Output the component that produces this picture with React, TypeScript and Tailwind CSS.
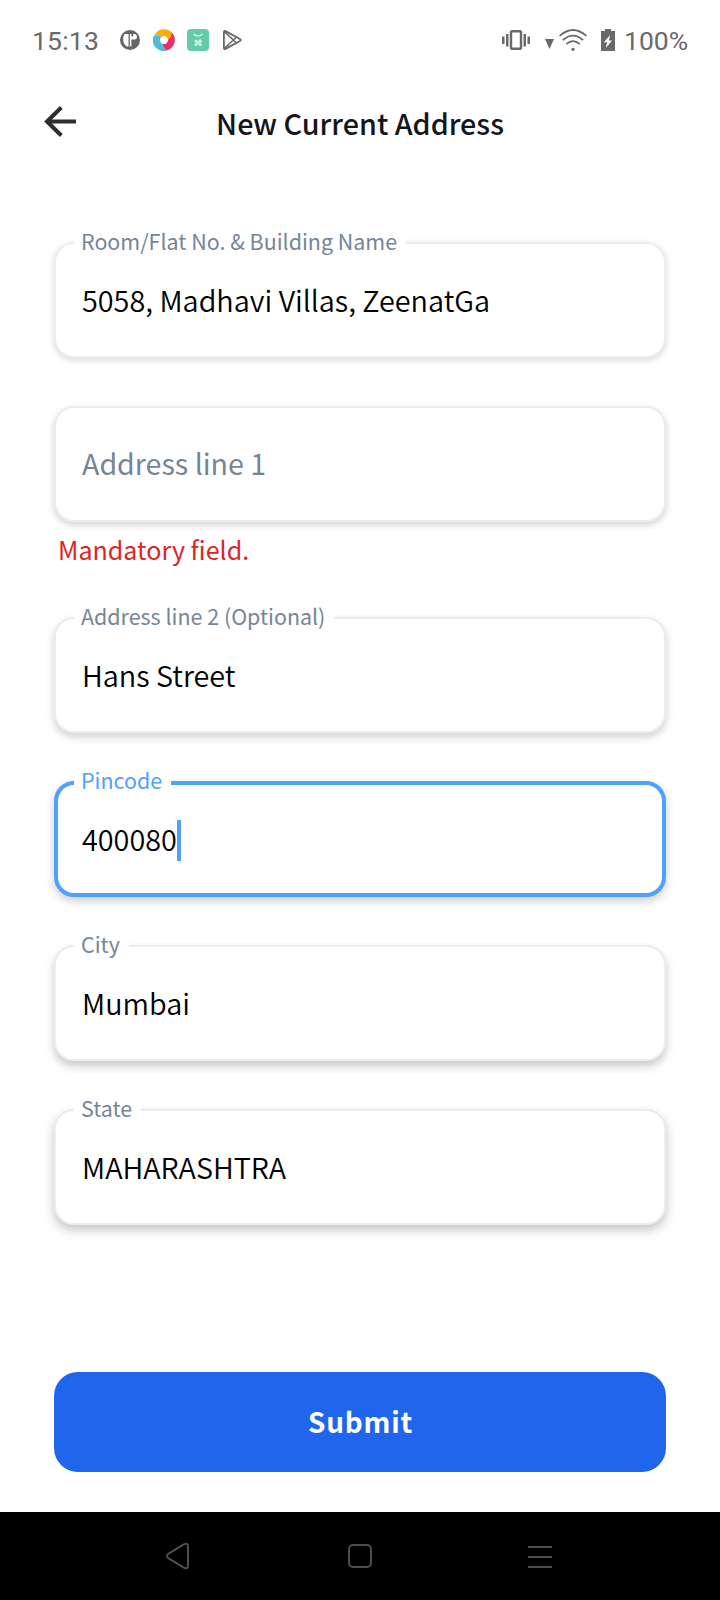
import React from "react";

type FieldProps = {
  label?: string;
  value?: string;
  placeholder?: string;
  focused?: boolean;
  shadow: string;
};

function Field({ label, value, placeholder, focused, shadow }: FieldProps) {
  return (
    <div
      className={`relative flex h-[116px] w-full items-center rounded-[20px] bg-white ${shadow} ${
        focused ? "border-4 border-[#4fa1ff] pl-6" : "border-2 border-[#e9eef3] pl-[26px]"
      }`}
    >
      {label && (
        <span
          className={`absolute bg-white pr-[9px] pl-[7px] text-[21.45px] leading-5 whitespace-nowrap ${
            focused ? "-top-[15px] left-4 text-[#4fa1ff]" : "-top-[13px] left-[18px] text-[#758596]"
          }`}
        >
          {label}
        </span>
      )}
      {value && <span className="text-[28.8px] leading-10 font-[350] whitespace-nowrap text-black">{value}</span>}
      {placeholder && (
        <span className="pb-[2px] text-[28.6px] leading-10 whitespace-nowrap text-[#758596]">{placeholder}</span>
      )}
      {focused && <span className="mt-[2px] h-[41px] w-1 bg-[#4fa1ff]" />}
    </div>
  );
}

function StatusBar() {
  return (
    <div className="flex h-20 items-center pr-8 pl-8 font-['Roboto',sans-serif] text-[26.5px] leading-8 text-[#696969]">
      <span className="w-[68px] pt-px tracking-[0.2px] whitespace-nowrap">15:13</span>
      <svg className="ml-5" width="20" height="20" viewBox="0 0 20 20">
        <circle cx="10" cy="10" r="10" fill="#666" />
        <path d="M4.500 4h4v12.500H7Q3.200 14 3.200 9.500q0-3.200 1.300-5.500z" fill="#fff" />
        <path d="M9.800 4h5.600q1.600 1.300 1.600 2.800 0 2.600-2.400 2.800h-3.200v6.900H9.800z" fill="#fff" />
        <rect x="11.400" y="4" width="1.800" height="2.400" fill="#666" />
      </svg>
      <svg className="ml-[13px]" width="22" height="22" viewBox="0 0 22 22">
        <path d="M1 7A11 11 0 0 1 18.400 3Q19.500 8 15 11A4 4 0 0 0 8.500 8Q5 5 1 7z" fill="#fbad0b" />
        <path d="M18.400 3A11 11 0 0 1 14 21.500Q10 20 9.500 14.800A4 4 0 0 0 15 11Q19 8 18.400 3z" fill="#e8316c" />
        <path d="M14 21.500A11 11 0 0 1 0 8.500L1 7Q5 5 8.500 8A4 4 0 0 0 9.500 14.800Q10 20 14 21.500z" fill="#52b9d6" />
      </svg>
      <svg className="ml-3" width="22" height="22" viewBox="0 0 22 22">
        <rect width="22" height="22" rx="4" fill="#62cbaa" />
        <path d="M6.500 5.200Q11 8.500 15.500 5.200" fill="none" stroke="#fff" strokeWidth="1.300" />
        <g fill="#d9f4eb">
          <circle cx="9" cy="12" r="1.600" />
          <circle cx="13.200" cy="12" r="1.800" />
          <circle cx="9" cy="15.500" r="1.600" />
          <circle cx="13.200" cy="15.500" r="1.600" />
          <circle cx="11" cy="13.800" r="1.200" />
        </g>
      </svg>
      <svg className="ml-[14px]" width="19" height="20" viewBox="0 0 19 20" fill="none" stroke="#696969" strokeWidth="1.800" strokeLinejoin="round">
        <path d="M.9 2Q.9.300 2.500 1.100L17 9q1.300 1 0 2L2.500 18.900Q.9 19.600.9 18z" />
        <path d="M1.300 1.500 13.500 13M1.300 18.500 13.500 7" strokeWidth="1.600" />
      </svg>

      <svg className="ml-auto" width="28" height="20" viewBox="0 0 28 20" fill="#696969">
        <path d="M0 6.500h2.500v7.500H0zM4 4h2.500v12.500H4zM21.500 4H24v12.500h-2.500zM25.500 6.500H28v7.500h-2.500z" />
        <rect x="9" y="1.200" width="10" height="17.600" rx="1" fill="none" stroke="#696969" strokeWidth="2.400" />
      </svg>
      <svg className="mt-2 ml-[15px]" width="9" height="10" viewBox="0 0 9 10">
        <path d="M0 0h9L4.500 10z" fill="#696969" />
      </svg>
      <svg className="ml-[5px]" width="28" height="22" viewBox="0 0 28 22" fill="none" stroke="#696969" strokeWidth="1.700">
        <path d="M.6 6.800Q14-4.800 27.400 6.800M3.800 11.100Q14 2 24.200 11.100M7.300 15.200Q14 9 20.700 15.200" />
        <circle cx="14" cy="20.300" r="1.600" fill="#696969" stroke="none" />
      </svg>
      <svg className="ml-[14px]" width="14" height="22" viewBox="0 0 14 22">
        <path d="M0 2h4V0h6v2h4v20H0z" fill="#696969" />
        <path d="M9.200 6 2.800 13.200h3.400L4.800 19l6.300-7.600H7.800z" fill="#fff" />
      </svg>
      <span className="ml-[9px] w-16 pt-px whitespace-nowrap">100%</span>
    </div>
  );
}

function NavBar() {
  return (
    <div className="flex h-[88px] items-center bg-black pl-[165px]">
      <svg width="26" height="28" viewBox="0 0 26 28" fill="none" stroke="#4e4e4e" strokeWidth="2">
        <path d="M3.300 11.800 18.300 2.600Q23 .2 23 4.500v19q0 4.300-4.700 1.900L3.300 16.200q-2.600-2.200 0-4.400z" />
      </svg>
      <svg className="ml-[157px]" width="24" height="24" viewBox="0 0 24 24" fill="none" stroke="#4e4e4e" strokeWidth="2">
        <rect x="1" y="1" width="22" height="22" rx="4" />
      </svg>
      <svg className="mt-[2px] ml-[156px]" width="24" height="22" viewBox="0 0 24 22" stroke="#4e4e4e" strokeWidth="2">
        <path d="M0 1h24M0 11h24M0 21h24" />
      </svg>
    </div>
  );
}

export default function App() {
  return (
    <div className="flex h-[1600px] w-[720px] flex-col bg-white font-['Noto_Sans_CJK_SC',sans-serif]">
      <StatusBar />
      <header className="grid h-[84px] grid-cols-[76px_1fr_76px] items-center">
        <svg className="ml-11" width="32" height="32" viewBox="0 0 32 32" fill="none" stroke="#2e2e2e" strokeWidth="4">
          <path d="M32 15.500H3M17.300 1.500 3 15.500l14.300 14" />
        </svg>
        <h1 className="pt-[2px] text-center text-[28.7px] leading-10 font-medium text-[#13171b]">New Current Address</h1>
      </header>
      <main className="flex flex-1 flex-col px-[54px] pt-[78px]">
        <div className="flex flex-col gap-12">
          <Field label="Room/Flat No. & Building Name" value="5058, Madhavi Villas, ZeenatGa" shadow="shadow-[0_2px_6px_rgba(0,0,0,0.16)]" />
          <div className="h-[163px]">
            <Field placeholder="Address line 1" shadow="shadow-[0_3px_7px_rgba(0,0,0,0.18)]" />
            <p className="mt-[7px] pl-1 text-[25.1px] leading-10 whitespace-nowrap text-[#dc2626]">Mandatory field.</p>
          </div>
          <Field label="Address line 2 (Optional)" value="Hans Street" shadow="shadow-[0_4px_8px_rgba(0,0,0,0.19)]" />
          <Field label="Pincode" value="400080" focused shadow="shadow-[0_4px_10px_rgba(0,0,0,0.2)]" />
          <Field label="City" value="Mumbai" shadow="shadow-[0_5px_10px_rgba(0,0,0,0.22)]" />
          <Field label="State" value="MAHARASHTRA" shadow="shadow-[0_5px_11px_rgba(0,0,0,0.24)]" />
        </div>
        <button className="mt-[147px] flex h-[100px] w-full items-center justify-center rounded-3xl bg-[#1f66ec] pb-[2px] pl-px text-[27.9px] leading-10 font-bold tracking-[0.8px] text-white">
          Submit
        </button>
      </main>
      <NavBar />
    </div>
  );
}
